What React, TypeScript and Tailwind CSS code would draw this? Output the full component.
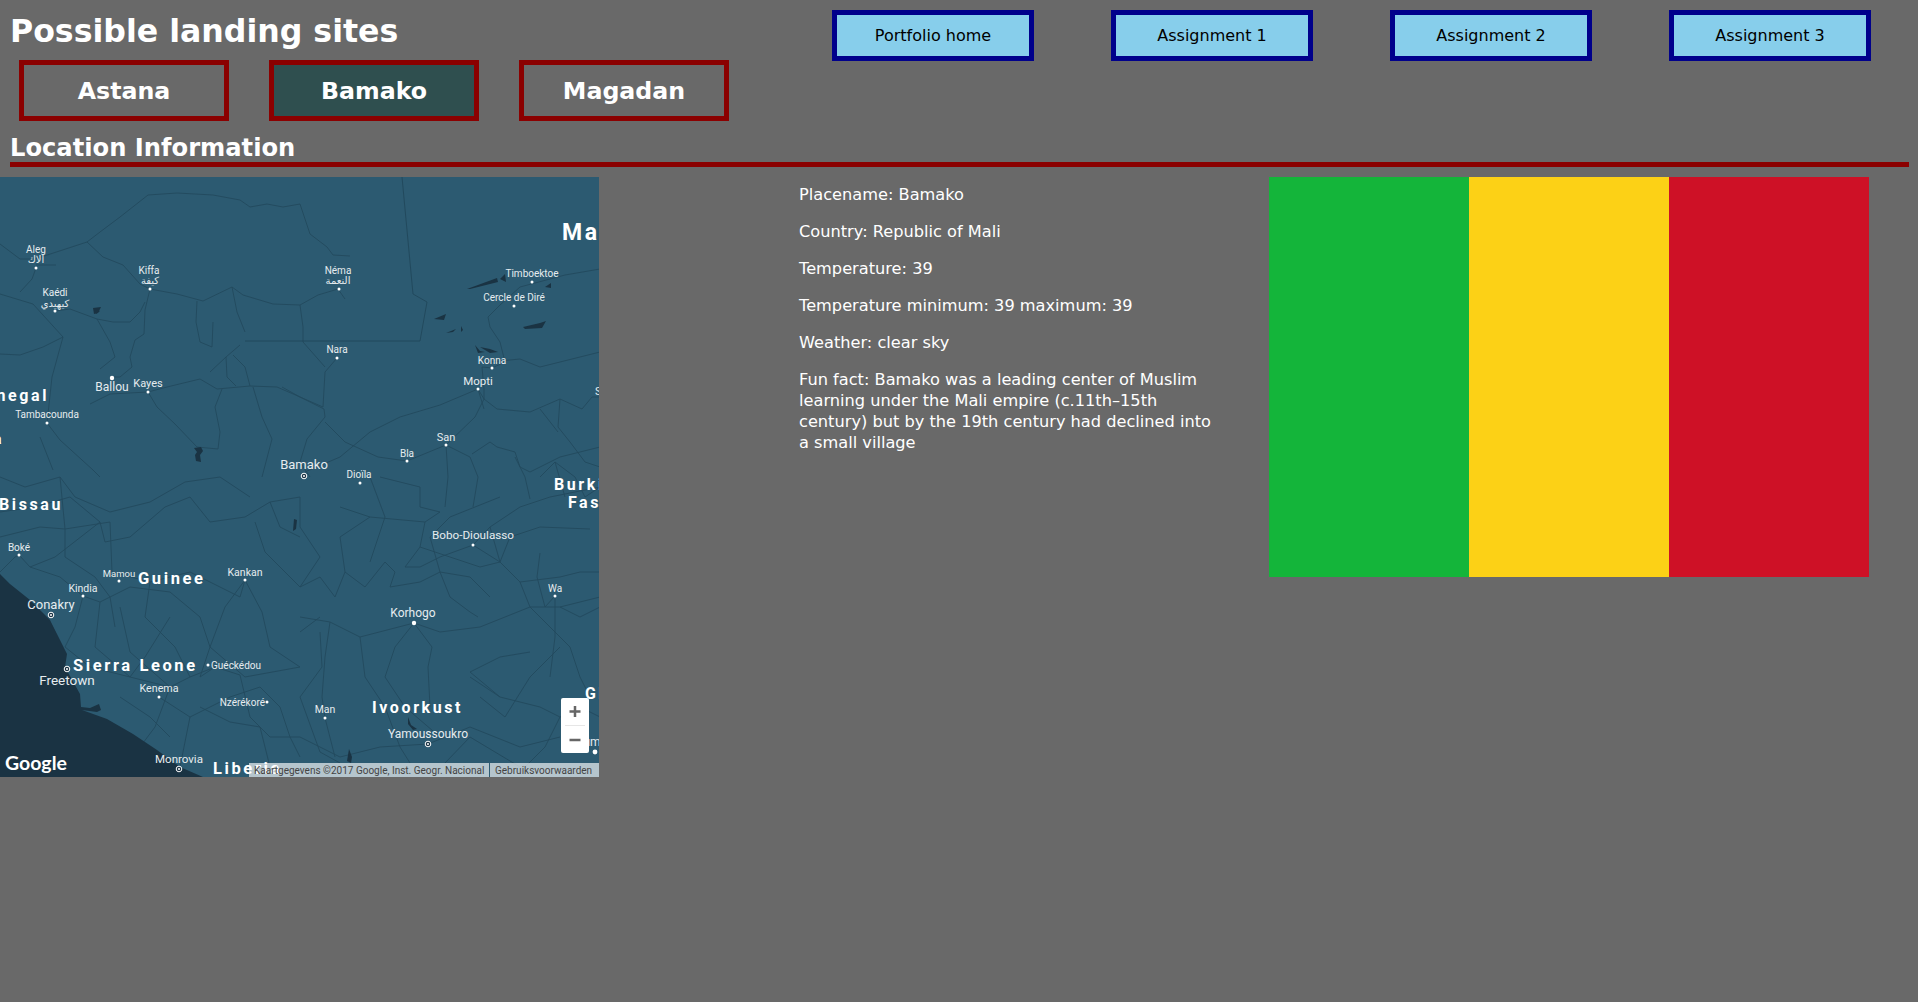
import React from 'react';

const FONT = "font-['DejaVu_Sans',Verdana,sans-serif]";

const navLinks = ['Portfolio home', 'Assignment 1', 'Assignment 2', 'Assignment 3'];
const cities = ['Astana', 'Bamako', 'Magadan'];

const facts = [
  'Placename: Bamako',
  'Country: Republic of Mali',
  'Temperature: 39',
  'Temperature minimum: 39 maximum: 39',
  'Weather: clear sky',
  'Fun fact: Bamako was a leading center of Muslim learning under the Mali empire (c.11th–15th century) but by the 19th century had declined into a small village',
];

// roads and rivers, traced by eye
const roads = [
  'M0 67 20 82 35 82 87 65 100 55 120 40 148 18 177 16 213 18 240 23 250 30 267 27 283 30 300 27 310 57 327 70 333 78 350 79',
  'M87 65 103 80 123 88 140 107 150 112 177 117 203 124 232 110 243 118 273 127 300 128 318 118 338 112 345 122',
  'M150 112 145 133 144 157 135 163 130 180 132 190 120 200 112 200',
  'M36 91 32 102 20 115M36 88 56 88',
  'M0 117 33 127 63 160 52 200 47 246M0 177 20 178 43 170 63 160',
  'M47 246 60 263 93 293 100 300M40 260 53 293',
  'M90 227 110 217 148 215 167 210 200 202 217 212 250 209 277 210 300 220',
  'M55 134 70 132 97 142 113 145 130 145 140 135 145 125M97 142 110 165 115 180 100 192',
  'M197 124 196 145 200 165 212 170 213 145M232 110 237 135 245 155',
  'M148 215 157 230 175 247 197 270 218 272 220 255 215 230 222 212',
  'M210 195 226 180 240 168M226 180 227 200 236 209M233 178 245 190 250 209',
  'M300 220 323 230 325 195 337 181M282 210 300 220 324 232 325 240 307 262 300 285 310 300',
  'M325 245 345 265 378 280 407 284 446 268 475 240 484 222 478 212 440 228 400 240 370 255 340 280 305 295',
  'M300 128 303 150 303 165 325 190M253 210 262 240 272 262 262 300',
  'M484 222 497 232 530 235 560 222 582 232 592 220 600 220M484 222 484 212 482 190 492 191 505 185 500 165 490 150 488 140 500 128 520 110 565 98 600 92',
  'M560 222 558 250 570 265 585 285 600 290M540 232 558 255M478 212 484 232',
  'M446 268 448 300 445 330M446 268 470 280 478 300 473 330',
  'M472 277 490 265 497 270 515 275 520 290 530 295 560 280 600 270M515 280 525 300 530 322',
  'M540 300 555 285 575 300 585 320 600 310M555 285 565 320',
  'M490 185 520 182 540 190 560 185 600 175',
  'M0 335 35 330 70 320 100 345 105 365 130 360 165 330 190 320 210 345 245 340 270 325 300 320',
  'M0 360 40 350 65 352 65 380 95 400 110 420 115 450M65 352 110 345 112 395 150 405 190 395 240 420 245 403',
  'M0 395 15 380 19 378 30 390 60 400 83 419 100 425 130 410 170 415 200 440 210 470 245 500 300 490',
  'M245 403 225 430 210 470M245 403 262 435 270 470 300 490',
  'M83 419 75 450 65 470 90 490 130 500 145 480 170 440M130 500 170 510 190 500 215 490 240 498',
  'M120 430 130 475 170 510 155 550 140 570M159 520 190 540 180 590M190 540 230 520 260 510 280 530 290 560 300 580',
  'M240 498 250 540 270 560 300 560 340 580 380 570 428 567 470 550 520 570 560 560',
  'M300 440 330 445 360 460 414 446 440 455 480 450 505 440 530 430 560 430 580 440 600 430',
  'M330 445 325 480 322 520 325 541 335 580M360 460 365 500 385 530 400 570 410 586',
  'M414 446 395 470 385 500 405 530 440 560M414 446 432 470 428 490 430 530',
  'M300 410 320 400 335 420 345 395 365 410 385 385 395 395 390 410 420 405 440 395 450 420 470 435 478 440',
  'M473 368 440 380 420 390 405 390 420 370 425 345 440 335 420 330 420 310 400 305 380 300',
  'M473 368 500 385 520 405 530 430 570 470 580 500 590 520M473 368 490 350 520 330 550 320 600 310',
  'M420 370 450 380 480 390 500 385M440 395 470 400 490 420M520 405 560 400 580 395 600 395',
  'M540 376 537 400 545 430 555 419 555 460 550 500M560 430 600 420',
  'M530 475 500 480 470 495 500 520 540 530 560 540 545 570 525 590M500 520 470 500',
  'M300 455 320 440M320 455 322 490 300 520 320 575 340 586',
  'M560 540 580 530 600 540',
  'M60 300 75 320 110 335 150 325 185 305 220 300 250 320M0 300 25 310 60 300 65 352',
  'M150 405 145 440 175 470 190 500M100 425 95 470 130 500M30 390 55 380 100 345',
  'M300 320 300 350 320 380 300 410M255 345 265 375 300 410M270 325 280 350 300 360',
  'M340 330 370 340 425 345M370 300 385 340 370 385M345 395 340 360 370 340',
  'M440 395 430 360 450 340 500 320M500 385 510 360 540 350 590 352M490 350 500 385',
  'M200 530 230 545 260 550 270 590M120 520 150 540 170 560M210 470 200 500 215 490',
  'M560 470 530 500 505 540 480 520M445 586 470 560 520 590',
];

const waters = [
  '467 112 497 101 498 105 470 112',
  '500 102 505 97 506 105',
  '523 150 540 146 546 144 542 151 525 152',
  '446 156 456 152 453 155',
  '461 149 463 153 461 155',
  '475 168 480 174 485 175 478 176',
  '194 271 201 270 203 274 200 278 201 285 196 284 195 278 197 275',
  '94 132 100 134 96 137',
  '480 170 490 172 498 175 490 176',
  '545 110 551 106 551 111',
  '434 142 446 137 444 143',
  '93 131 101 130 98 136 94 137',
  '294 342 297 343 296 352 293 354',
  '408 540 411 548 417 552 413 553 408 547',
  '349 572 352 580 351 586 347 584',
];

type Label = { t: string; x: number; y: number; s?: number; a?: 'start' | 'middle' | 'end' };

const cityLabels: Label[] = [
  { t: 'Aleg', x: 36, y: 76 },
  { t: 'الاك', x: 36, y: 86 },
  { t: 'Kiffa', x: 149, y: 97 },
  { t: 'كيفة', x: 150, y: 107 },
  { t: 'Kaédi', x: 55, y: 119 },
  { t: 'كيهيدي', x: 55, y: 130 },
  { t: 'Ballou', x: 112, y: 214, s: 12 },
  { t: 'Kayes', x: 148, y: 210, s: 11 },
  { t: 'Tambacounda', x: 47, y: 241, s: 10 },
  { t: 'Bamako', x: 304, y: 292, s: 13 },
  { t: 'Timboektoe', x: 532, y: 100 },
  { t: 'Cercle de Diré', x: 514, y: 124 },
  { t: 'Néma', x: 338, y: 97 },
  { t: 'النعمة', x: 338, y: 107 },
  { t: 'Nara', x: 337, y: 176 },
  { t: 'Konna', x: 492, y: 187 },
  { t: 'Mopti', x: 478, y: 208, s: 11.5 },
  { t: 'San', x: 446, y: 264, s: 11 },
  { t: 'Bla', x: 407, y: 280 },
  { t: 'Dioïla', x: 359, y: 301 },
  { t: 'Boké', x: 19, y: 374 },
  { t: 'Mamou', x: 119, y: 400, s: 9.5 },
  { t: 'Kankan', x: 245, y: 399, s: 10.5 },
  { t: 'Kindia', x: 83, y: 415, s: 10.5 },
  { t: 'Conakry', x: 51, y: 432, s: 13 },
  { t: 'Freetown', x: 67, y: 508, s: 13.5 },
  { t: 'Guéckédou', x: 211, y: 492, s: 10, a: 'start' },
  { t: 'Kenema', x: 159, y: 515, s: 10.7 },
  { t: 'Nzérékoré', x: 265, y: 529, s: 10, a: 'end' },
  { t: 'Monrovia', x: 179, y: 586, s: 11.5 },
  { t: 'Bobo-Dioulasso', x: 473, y: 362, s: 11.7 },
  { t: 'Wa', x: 555, y: 415 },
  { t: 'Korhogo', x: 413, y: 440, s: 12 },
  { t: 'Man', x: 325, y: 536, s: 10.5 },
  { t: 'Yamoussoukro', x: 428, y: 561, s: 12 },
  { t: 'Sikasso', x: 595, y: 218, s: 11, a: 'start' },
  { t: 'Kumasi', x: 576, y: 569, s: 12, a: 'start' },
];

const countryLabels: Label[] = [
  { t: 'Mali', x: 562, y: 63, s: 23 },
  { t: 'Senegal', x: 49, y: 224, s: 16, a: 'end' },
  { t: 'Gambia', x: 4, y: 267, s: 14, a: 'end' },
  { t: 'Bissau', x: -1, y: 333, s: 16 },
  { t: 'Guinee', x: 138, y: 407, s: 16.5 },
  { t: 'Sierra Leone', x: 73, y: 494, s: 16.5 },
  { t: 'Liberia', x: 213, y: 597, s: 16.5 },
  { t: 'Ivoorkust', x: 372, y: 536, s: 16 },
  { t: 'Burkina', x: 554, y: 313, s: 16 },
  { t: 'Faso', x: 568, y: 331, s: 16 },
  { t: 'Ghana', x: 585, y: 522, s: 16 },
];

const dots = [
  [36, 91], [150, 112], [55, 134], [112, 201, 2.2], [148, 215], [47, 246], [532, 105], [514, 129], [339, 112], [337, 181],
  [492, 191], [478, 212], [446, 268], [407, 284], [360, 306], [19, 378], [119, 404], [245, 403], [83, 419], [208, 488],
  [159, 520], [267, 525], [473, 368], [555, 419], [414, 446, 2.2], [325, 541], [595, 575, 2.4],
];

const capitals = [[304, 299], [51, 438], [67, 492], [179, 592], [428, 567]];

const MapView = () => (
  <div className="relative w-[599px] h-[600px] overflow-hidden shrink-0 bg-[#2c5a71]">
    <svg width="600" height="600" viewBox="0 0 600 600" className="block">
      <g fill="none" stroke="#224a5e" strokeWidth="0.9">
        {roads.map((d) => (
          <path key={d} d={d} />
        ))}
      </g>
      <path d="M420 164H245M420 164 427 125 413 117 402 0" fill="none" stroke="#1f4558" strokeWidth="0.8" />
      <polygon
        points="0,397 10,407 30,423 50,443 57,457 67,477 65,490 80,517 81,530 90,531 99,527 101,533 97,535 82,533 107,542 133,557 157,573 180,590 203,600 0,600"
        fill="#1a3343"
      />
      {waters.map((p) => (
        <polygon key={p} points={p} fill="#1a3343" />
      ))}
      <g fontFamily="Roboto, sans-serif" fill="#fff">
        {countryLabels.map((l) => (
          <text key={l.t} x={l.x} y={l.y} fontSize={l.s} fontWeight="700" letterSpacing="2.6" textAnchor={l.a ?? 'start'}>
            {l.t}
          </text>
        ))}
      </g>
      <g fontFamily="Roboto, 'DejaVu Sans', sans-serif" fill="#e6ecef">
        {cityLabels.map((l) => (
          <text key={l.t} x={l.x} y={l.y} fontSize={l.s ?? 10} textAnchor={l.a ?? 'middle'}>
            {l.t}
          </text>
        ))}
      </g>
      {dots.map(([x, y, r]) => (
        <circle key={`${x}-${y}`} cx={x} cy={y} r={r ?? 1.5} fill="#fff" />
      ))}
      {capitals.map(([x, y]) => (
        <g key={`${x}-${y}`}>
          <circle cx={x} cy={y} r="2.8" fill="#1a3343" stroke="#fff" strokeWidth="1" />
          <circle cx={x} cy={y} r="1" fill="#fff" />
        </g>
      ))}
      <text x="5" y="593" fontFamily="Lato, sans-serif" fontSize="19.5" fontWeight="700" fill="#fff">
        Google
      </text>
    </svg>

    {/* zoom control */}
    <div className="absolute left-[561px] top-[521px] w-[28px] h-[55px] bg-white rounded-[2px] flex flex-col items-center">
      <svg width="28" height="27" viewBox="0 0 28 27">
        <path d="M14 8v11M8.500 13.500h11" stroke="#666" strokeWidth="2.500" />
      </svg>
      <div className="w-[20px] h-px bg-[#e6e6e6]" />
      <svg width="28" height="27" viewBox="0 0 28 27">
        <path d="M8.500 14h11" stroke="#666" strokeWidth="2.500" />
      </svg>
    </div>

    {/* attribution */}
    <div className="absolute left-[249px] bottom-0 w-[350px] h-[14px] flex bg-white/65 text-[#444] text-[10px] leading-[15px] font-['Roboto',sans-serif] whitespace-nowrap">
      <span className="w-[241px] pl-[5px] border-r border-[#2c5a71]">Kaartgegevens ©2017 Google, Inst. Geogr. Nacional</span>
      <span className="pl-[5px]">Gebruiksvoorwaarden</span>
    </div>
  </div>
);

const App = () => {
  return (
    <div className={`${FONT} w-full min-h-screen bg-[#696969] text-white`}>
      <div className="flex h-[128px]">
        <div className="w-[832px] shrink-0 pl-[10px]">
          <h1 className="h-[60px] text-[31.6px] leading-[62px] font-bold">Possible landing sites</h1>
          <div className="flex gap-[40px] ml-[9px]">
            {cities.map((city) => (
              <button
                key={city}
                className={`w-[210px] h-[61px] border-[5px] border-[#8b0000] text-[23.7px] leading-[53px] font-bold ${
                  city === 'Bamako' ? 'bg-[#2f4f4f]' : ''
                }`}
              >
                {city}
              </button>
            ))}
          </div>
        </div>
        <nav className="flex gap-[77px] pt-[10px]">
          {navLinks.map((link) => (
            <a
              key={link}
              className="w-[202px] h-[51px] flex items-center justify-center bg-[#87ceeb] border-[5px] border-[#00008b] text-black text-[16px] leading-[43px]"
            >
              {link}
            </a>
          ))}
        </nav>
      </div>

      <h2 className="ml-[10px] w-[1899px] h-[39px] border-b-[5px] border-[#8b0000] text-[24.2px] leading-[40px] font-bold">
        Location Information
      </h2>

      <div className="flex mt-[10px]">
        <MapView />
        <div className="w-[415px] ml-[200px] mr-[55px] pt-[7px] text-[16.2px] leading-[21px] flex flex-col gap-[16px]">
          {facts.map((fact) => (
            <p key={fact}>{fact}</p>
          ))}
        </div>
        <div className="flex w-[600px] h-[400px]">
          <div className="flex-1 bg-[#14b53a]" />
          <div className="flex-1 bg-[#fcd116]" />
          <div className="flex-1 bg-[#ce1126]" />
        </div>
      </div>
    </div>
  );
};

export default App;
